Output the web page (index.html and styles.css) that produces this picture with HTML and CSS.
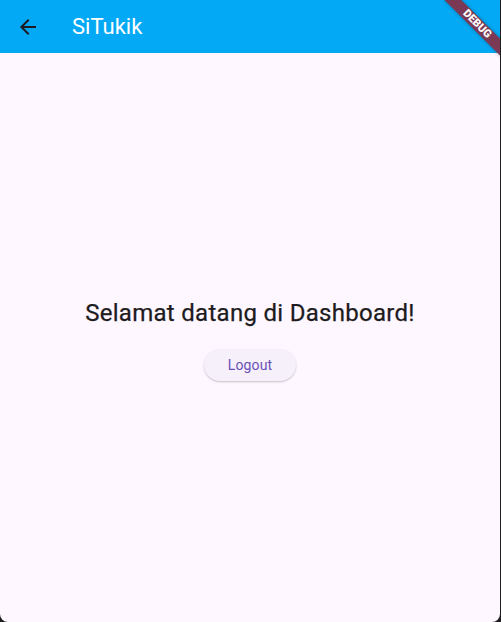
FILE: index.html
```html
<!DOCTYPE html>
<html lang="id">
<head>
<meta charset="utf-8">
<title>SiTukik</title>
<link rel="stylesheet" href="styles.css">
</head>
<body>
<div class="app">
  <header class="appbar">
    <button class="back" aria-label="Kembali">
      <svg width="24" height="24" viewBox="0 0 24 24"><path d="M20 11H7.83l5.59-5.59L12 4l-8 8 8 8 1.41-1.41L7.83 13H20v-2z" fill="#1d1b20"/></svg>
    </button>
    <h1 class="title">SiTukik</h1>
  </header>
  <main class="content">
    <h2 class="welcome">Selamat datang di Dashboard!</h2>
    <button class="logout">Logout</button>
  </main>
  <div class="banner-anchor"><div class="banner">DEBUG</div></div>
</div>
</body>
</html>
```
FILE: styles.css
```css
html, body {
  margin: 0;
  padding: 0;
  width: 501px;
  height: 622px;
  overflow: hidden;
  background: #1e1e1e;
}
.app {
  position: relative;
  width: 500px;
  height: 622px;
  overflow: hidden;
  background: #fef7ff;
  border-radius: 0 0 8px 8px;
  display: flex;
  flex-direction: column;
  font-family: Roboto, "Noto Sans", sans-serif;
}
.appbar {
  height: 53px;
  flex: none;
  background: #03a9f4;
  display: flex;
  align-items: center;
  padding-left: 16px;
}
.back {
  width: 24px;
  height: 24px;
  padding: 0;
  border: 0;
  background: none;
  display: flex;
}
.title {
  margin: 0 0 0 32px;
  font-size: 22px;
  font-weight: 400;
  color: #ffffff;
  line-height: 28px;
}
.content {
  flex: 1;
  display: flex;
  flex-direction: column;
  align-items: center;
  justify-content: center;
  padding-top: 2px;
}
.welcome {
  margin: 0;
  font-size: 24px;
  font-weight: 400;
  letter-spacing: 0.29px;
  -webkit-text-stroke: 0.25px #1d1b20;
  line-height: 32px;
  color: #1d1b20;
}
.logout {
  margin-top: 20px;
  height: 32px;
  padding: 0 24px;
  border: 0;
  border-radius: 16px;
  background: #f5f0fa;
  color: #6a4fb6;
  font-family: Roboto, "Noto Sans", sans-serif;
  font-size: 14px;
  font-weight: 400;
  letter-spacing: 0.1px;
  box-shadow: 0 1px 2px rgba(0,0,0,0.22);
}
.banner-anchor {
  position: absolute;
  top: 0;
  left: 501px;
  width: 0;
  height: 0;
  transform: rotate(45deg);
  transform-origin: 0 0;
}
.banner {
  position: absolute;
  left: -40px;
  top: 28px;
  width: 80px;
  height: 12px;
  background: #7a3a56;
  box-shadow: 0 0 4px rgba(0,0,0,0.3);
  color: #ffffff;
  font-family: Roboto, "Noto Sans", sans-serif;
  font-size: 11px;
  font-weight: 900;
  line-height: 12px;
  text-align: center;
}
```
